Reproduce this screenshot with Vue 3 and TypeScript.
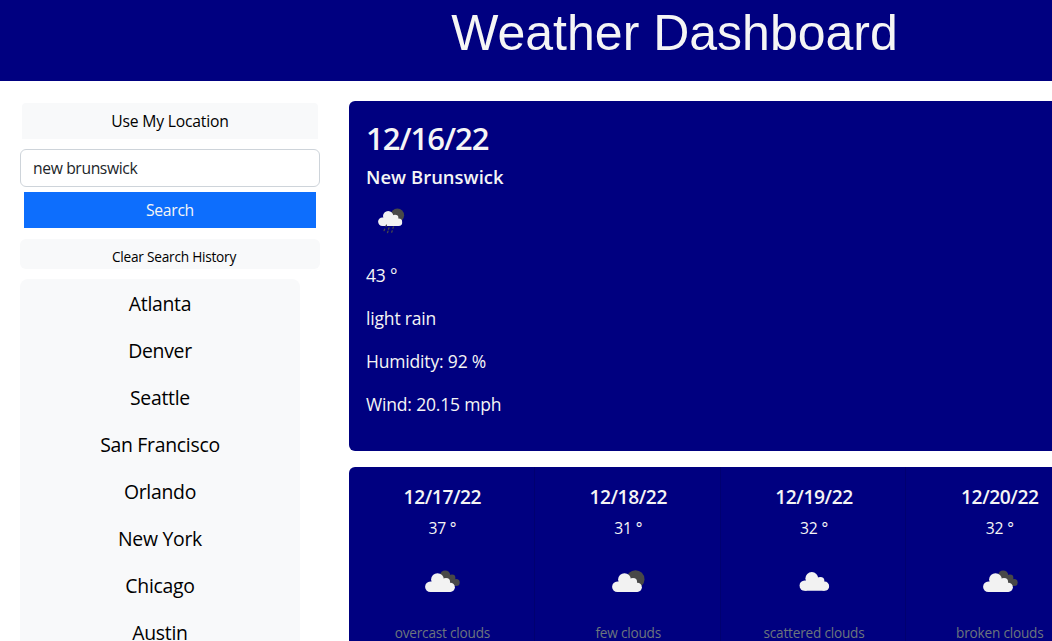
<script setup lang="ts">
import { ref } from 'vue'

type IconKind = 'overcast' | 'few' | 'scattered'

interface ForecastDay {
  date: string
  temp: string
  icon: IconKind
  description: string
}

const query = ref('new brunswick')

const history: string[] = [
  'Atlanta',
  'Denver',
  'Seattle',
  'San Francisco',
  'Orlando',
  'New York',
  'Chicago',
  'Austin',
]

const forecast: ForecastDay[] = [
  { date: '12/17/22', temp: '37 °', icon: 'overcast', description: 'overcast clouds' },
  { date: '12/18/22', temp: '31 °', icon: 'few', description: 'few clouds' },
  { date: '12/19/22', temp: '32 °', icon: 'scattered', description: 'scattered clouds' },
  { date: '12/20/22', temp: '32 °', icon: 'overcast', description: 'broken clouds' },
]
</script>

<template>
  <div class="viewport">
    <svg class="defs" aria-hidden="true">
      <symbol id="cloud" viewBox="0 0 30 19">
        <circle cx="5.3" cy="13.6" r="5.2" />
        <circle cx="12.5" cy="6.5" r="6.4" />
        <circle cx="21" cy="9" r="4.1" />
        <circle cx="25.3" cy="14.2" r="4.6" />
        <path d="M5.3 18.8V9l4-1h12l4 3v7.8z" />
      </symbol>
    </svg>

    <header class="header">
      <h1 class="title">Weather Dashboard</h1>
    </header>

    <div class="content">
      <aside class="sidebar">
        <button class="btn locate">Use My Location</button>
        <input v-model="query" class="field" type="text" />
        <button class="btn search">Search</button>
        <button class="btn clear">Clear Search History</button>
        <ul class="history">
          <li v-for="city in history" :key="city">{{ city }}</li>
        </ul>
      </aside>

      <main class="main">
        <section class="current">
          <h2 class="current-date">12/16/22</h2>
          <h3 class="current-city">New Brunswick</h3>
          <svg class="icon" viewBox="0 0 50 50">
            <circle cx="31.4" cy="20.2" r="6.7" fill="#484848" />
            <use href="#cloud" x="12" y="15.8" width="24.4" height="15.4" fill="#f2f2f2" />
            <path
              d="M20.4 30.2l-.4 1M18.6 34.2l-.5 1.4M23 32.8l-.5 1.4M22 36.2l-.5 1.4M27.4 32l-.5 1.2M26.2 35.8l-.5 1.4"
              stroke="#484848"
              stroke-width="1.3"
              stroke-linecap="round"
            />
          </svg>
          <p>43 °</p>
          <p>light rain</p>
          <p>Humidity: 92 %</p>
          <p>Wind: 20.15 mph</p>
        </section>

        <section class="forecast">
          <article v-for="day in forecast" :key="day.date" class="day">
            <h4>{{ day.date }}</h4>
            <p class="day-temp">{{ day.temp }}</p>
            <svg class="icon" viewBox="0 0 50 50">
              <g v-if="day.icon === 'overcast'" fill="#484848">
                <circle cx="28.2" cy="18.4" r="5" />
                <circle cx="35" cy="21" r="3.4" />
                <circle cx="39.2" cy="25.5" r="3.5" />
                <path d="M26 18h7l5 11H28z" />
              </g>
              <circle v-if="day.icon === 'few'" cx="32.5" cy="22.2" r="9" fill="#484848" />
              <use
                v-if="day.icon === 'scattered'"
                href="#cloud"
                x="10.3"
                y="15"
                width="30"
                height="19"
                fill="#f2f2f2"
              />
              <use
                v-else
                href="#cloud"
                :x="day.icon === 'few' ? 9 : 8"
                y="16.1"
                width="30"
                height="19"
                fill="#f2f2f2"
              />
            </svg>
            <p class="day-desc">{{ day.description }}</p>
          </article>
        </section>
      </main>
    </div>
  </div>
</template>

<style>
body {
  margin: 0;
  background: #fff;
  overflow: hidden;
}
</style>

<style scoped>
* {
  box-sizing: border-box;
}

.viewport {
  width: 100%;
  height: 641px;
  overflow: hidden;
  font-family: 'Open Sans', 'Noto Sans', sans-serif;
  font-size: 16px;
  line-height: 24px;
  color: #000;
}

.defs {
  display: block;
  width: 0;
  height: 0;
}

h1,
h2,
h3,
h4,
p,
ul {
  margin: 0;
  padding: 0;
}

.header {
  width: 1349px;
  height: 81px;
  background: #000080;
  color: #f5f5f5;
  text-align: center;
}

.title {
  padding-top: 3px;
  font: 400 50px/60px 'Liberation Sans', Arial, sans-serif;
}

.content {
  display: flex;
  align-items: flex-start;
  gap: 29px;
  width: 1279px;
  padding: 20px 0 0 20px;
}

.sidebar {
  display: flex;
  flex-direction: column;
  flex: 0 0 300px;
  padding-top: 2px;
}

.btn {
  padding: 0;
  border: 0;
  font-family: inherit;
  font-size: 15.7px;
  letter-spacing: -0.2px;
  color: #000;
  background: #f8f9fa;
}

.locate {
  height: 36px;
  margin: 0 2px;
  border-radius: 4px 4px 0 0;
}

.field {
  height: 38px;
  margin-top: 10px;
  padding: 0 12px;
  border: 1px solid #ced4da;
  border-radius: 6px;
  font-family: inherit;
  font-size: 15.7px;
  letter-spacing: -0.38px;
  color: #212529;
  background: #fff;
  outline: none;
}

.search {
  height: 36px;
  margin: 5px 4px 0;
  letter-spacing: -0.3px;
  color: #f5f5f5;
  background: #0d6efd;
}

.clear {
  height: 30px;
  margin-top: 11px;
  padding: 5px 0 0 8px;
  border-radius: 6px;
  font-size: 13.7px;
  letter-spacing: -0.25px;
}

.history {
  width: 280px;
  margin-top: 10px;
  padding-top: 1px;
  border-radius: 8px;
  background: #f8f9fa;
  list-style: none;
  text-align: center;
  font-size: 19.4px;
  letter-spacing: -0.28px;
}

.history li {
  height: 47px;
  line-height: 47px;
}

.main {
  flex: 0 0 930px;
}

.current {
  height: 350px;
  padding: 17px;
  border-radius: 6px;
  background: #000080;
  color: #f5f5f5;
  font-size: 17.5px;
  letter-spacing: -0.17px;
}

.current-date {
  font-size: 31px;
  font-weight: 600;
  line-height: 40px;
  letter-spacing: -1px;
}

.current-city {
  margin-top: 7px;
  font-size: 18.4px;
  font-weight: 600;
  line-height: 24px;
  letter-spacing: 0.05px;
}

.icon {
  display: block;
  width: 50px;
  height: 50px;
}

.current .icon {
  margin-top: 6px;
  margin-bottom: 17px;
}

.current p {
  height: 27px;
  margin-bottom: 16px;
  line-height: 26px;
}

.forecast {
  display: grid;
  grid-template-columns: repeat(5, 185.8px);
  height: 260px;
  margin-top: 16px;
  border-radius: 6px;
  background: #000080;
  color: #f5f5f5;
}

.day {
  display: flex;
  flex-direction: column;
  align-items: center;
  padding: 18px 0 0 2px;
  border-right: 1px solid #000070;
}

.day h4 {
  font-size: 19.2px;
  font-weight: 600;
  line-height: 24px;
  letter-spacing: -0.4px;
}

.day-temp {
  margin-top: 7px;
  font-size: 15.7px;
  letter-spacing: -0.2px;
}

.day .icon {
  margin-top: 17px;
}

.day-desc {
  margin-top: 14px;
  font-size: 13.6px;
  letter-spacing: -0.2px;
  color: #6c757d;
}
</style>
